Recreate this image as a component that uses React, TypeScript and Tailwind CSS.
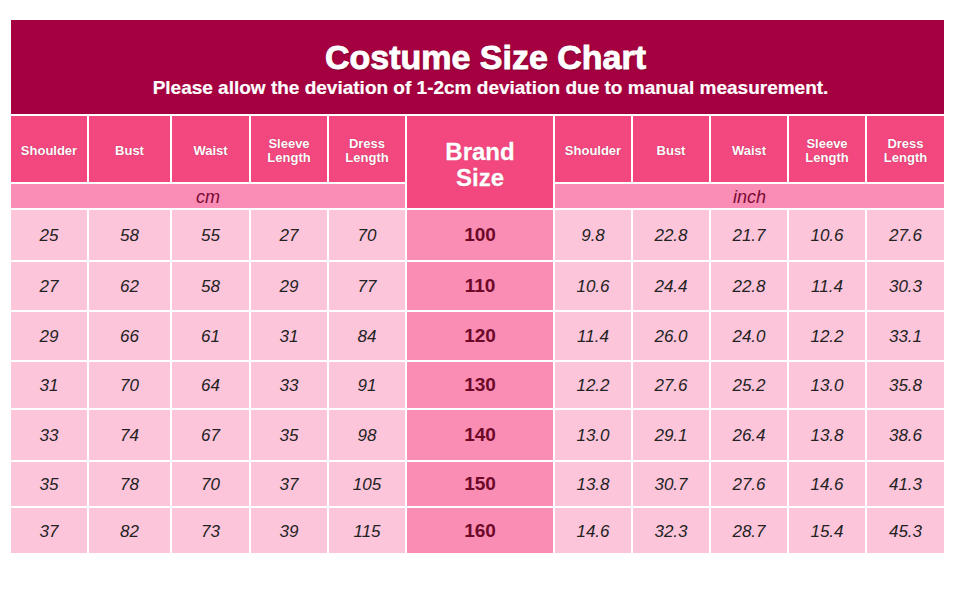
import React from "react";

const cmRows = [
  ["25", "58", "55", "27", "70"],
  ["27", "62", "58", "29", "77"],
  ["29", "66", "61", "31", "84"],
  ["31", "70", "64", "33", "91"],
  ["33", "74", "67", "35", "98"],
  ["35", "78", "70", "37", "105"],
  ["37", "82", "73", "39", "115"],
];
const sizes = ["100", "110", "120", "130", "140", "150", "160"];
const inchRows = [
  ["9.8", "22.8", "21.7", "10.6", "27.6"],
  ["10.6", "24.4", "22.8", "11.4", "30.3"],
  ["11.4", "26.0", "24.0", "12.2", "33.1"],
  ["12.2", "27.6", "25.2", "13.0", "35.8"],
  ["13.0", "29.1", "26.4", "13.8", "38.6"],
  ["13.8", "30.7", "27.6", "14.6", "41.3"],
  ["14.6", "32.3", "28.7", "15.4", "45.3"],
];

const headers: string[][] = [["Shoulder"], ["Bust"], ["Waist"], ["Sleeve", "Length"], ["Dress", "Length"]];

function HeaderCell({ lines }: { lines: string[] }) {
  return (
    <div className="bg-[#f2487f] flex flex-col items-center justify-center pt-[4px] text-white font-bold text-[13px] leading-[14px] [text-shadow:0_0_1px_rgba(120,0,40,0.5)]">
      {lines.map((l) => (
        <span key={l}>{l}</span>
      ))}
    </div>
  );
}

function DataCell({ v }: { v: string }) {
  return (
    <div className="bg-[#fdc5da] flex items-center justify-center pt-[2px] italic text-[17px] text-[#222]">
      {v}
    </div>
  );
}

export default function App() {
  return (
    <div
      className="w-[970px] h-[600px] bg-white pl-[11px] pt-[20px]"
      style={{ fontFamily: '"Liberation Sans", Arial, sans-serif' }}
    >
      <div className="grid w-[933px] gap-[2px] grid-cols-[76px_81px_77px_76px_76px_146px_76px_76px_76px_76px_77px] grid-rows-[94px_66px_24px_50px_48px_48px_46px_50px_44px_45px]">
        <div className="col-span-11 bg-[#a50040] flex flex-col items-center pt-[20px] text-white font-bold">
          <div className="ml-[16px] text-[34px] leading-[34px] [-webkit-text-stroke:0.9px_white] [text-shadow:1px_1px_2px_rgba(60,0,20,0.5)]">
            Costume Size Chart
          </div>
          <div className="ml-[26px] text-[19px] leading-[19px] mt-[4px] [-webkit-text-stroke:0.2px_white]">
            Please allow the deviation of 1-2cm deviation due to manual measurement.
          </div>
        </div>

        {headers.map((h) => (
          <HeaderCell key={h.join("")} lines={h} />
        ))}
        <div className="row-span-2 bg-[#f2487f] flex flex-col items-center justify-center pt-[6px] text-white font-bold text-[24px] leading-[26px] [-webkit-text-stroke:0.3px_white] [text-shadow:0_0_1px_rgba(120,0,40,0.5)]">
          <span>Brand</span>
          <span>Size</span>
        </div>
        {headers.map((h) => (
          <HeaderCell key={"i" + h.join("")} lines={h} />
        ))}

        <div className="col-span-5 bg-[#f98db5] flex items-center justify-center pt-[3px] italic text-[18px] text-[#7a0a33]">
          cm
        </div>
        <div className="col-span-5 bg-[#f98db5] flex items-center justify-center pt-[3px] italic text-[18px] text-[#7a0a33]">
          inch
        </div>

        {sizes.map((s, i) => (
          <React.Fragment key={s}>
            {cmRows[i].map((v, j) => (
              <DataCell key={"c" + j} v={v} />
            ))}
            <div className="bg-[#f98db3] flex items-center justify-center pt-[1px] font-bold text-[19px] text-[#6d0828]">
              {s}
            </div>
            {inchRows[i].map((v, j) => (
              <DataCell key={"n" + j} v={v} />
            ))}
          </React.Fragment>
        ))}
      </div>
    </div>
  );
}
